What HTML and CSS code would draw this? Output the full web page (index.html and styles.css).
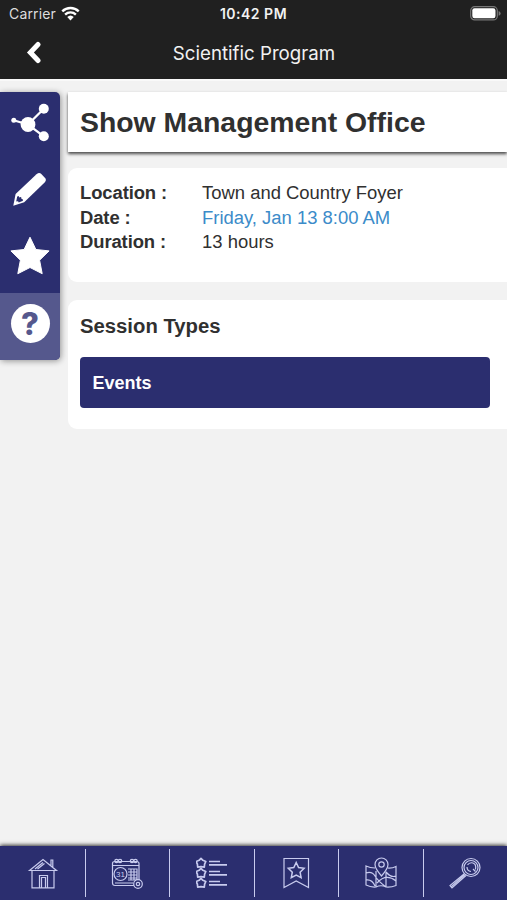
FILE: index.html
```html
<!doctype html>
<html lang="en">
    <head>
        <title>Scientific Program</title>
        <meta charset="UTF-8">
        <meta name="viewport" content="width=device-width, initial-scale=1">
        <link rel="stylesheet" href="styles.css">
    </head>
    <body>

        <header>
            <div class="status">
                <div class="carrier">
                    <span>Carrier</span>
                    <svg class="wifi" viewBox="0 0 18 14" width="19" height="15">
                        <path d="M1.2 4.9a11.4 11.4 0 0 1 15.6 0M3.9 8a7.4 7.4 0 0 1 10.2 0" fill="none" stroke="#fff" stroke-width="2.3"/>
                        <path d="M9 13.6L5.9 10.4a4.5 4.5 0 0 1 6.2 0z" fill="#fff"/>
                    </svg>
                </div>
                <div class="time">10:42 PM</div>
                <svg class="battery" viewBox="0 0 31 15" width="31" height="15">
                    <rect x=".7" y=".7" width="26.6" height="13.2" rx="4" fill="none" stroke="#777" stroke-width="1.2"/>
                    <rect x="2.3" y="2.3" width="23.2" height="10" rx="2.2" fill="#fff"/>
                    <path d="M28.6 5q2 .6 2 2.4t-2 2.4z" fill="#777"/>
                </svg>
            </div>
            <div class="titlebar">
                <a class="back" href="#" aria-label="Back">
                    <svg viewBox="0 0 16 24" width="16" height="24">
                        <path d="M12 3.500L4.400 11.500l7.600 8" fill="none" stroke="#fff" stroke-width="5" stroke-linecap="round"/>
                    </svg>
                </a>
                <div class="title">Scientific Program</div>
            </div>
        </header>

        <div class="page">
            <aside>
                <a class="tool" href="#" aria-label="Share">
                    <svg viewBox="0 0 40 40" width="40" height="40">
                        <path d="M3.6 18.2L18 22.5 33.8 6.7M18 22.5l15.8 11.8" fill="none" stroke="#fff" stroke-width="2.2"/>
                        <g fill="#fff">
                            <circle cx="3.8" cy="18.2" r="2.5"/>
                            <circle cx="18" cy="22.5" r="7.4"/>
                            <circle cx="33.8" cy="6.7" r="5"/>
                            <circle cx="33.8" cy="34.3" r="5"/>
                        </g>
                    </svg>
                </a>
                <a class="tool" href="#" aria-label="Notes">
                    <svg viewBox="0 0 40 40" width="40" height="40">
                        <path d="M26.500 5.200q2.800-2.300 4.800-.2l3.800 4q1.800 2.200-.5 4.500L14.200 33.200 3.300 36.800 5.600 25z" fill="#fff"/>
                        <path d="M6.200 32.500l.9-4.600q1.200-2.100 2.200.5 2.500-1 2.200 1.500 2.600.2 1 2.200l-3.800 1.400q-.3-1.700-2.500-1z" fill="#2b2e6f"/>
                    </svg>
                </a>
                <a class="tool" href="#" aria-label="Favorite">
                    <svg viewBox="0 0 40 40" width="40" height="40">
                        <path d="M20 1.200l5.900 12.300 13.200 1.400-9.500 9.300 2.600 13.500L20 31.500 7.800 37.700l2.600-13.500L.9 14.900l13.200-1.400z" fill="#fff" stroke="#fff" stroke-linejoin="round"/>
                    </svg>
                </a>
                <a class="tool active" href="#" aria-label="Help">
                    <span class="help">?</span>
                </a>
            </aside>

            <main>
                <h1>Show Management Office</h1>

                <section class="details">
                    <dl>
                        <dt>Location :</dt>
                        <dd>Town and Country Foyer</dd>
                        <dt>Date :</dt>
                        <dd><a href="#">Friday, Jan 13 8:00 AM</a></dd>
                        <dt>Duration :</dt>
                        <dd>13 hours</dd>
                    </dl>
                </section>

                <section class="types">
                    <h2>Session Types</h2>
                    <a class="type" href="#">Events</a>
                </section>
            </main>
        </div>

        <nav>
            <a href="#" aria-label="Home">
                <svg viewBox="0 0 32 32" width="32" height="32">
                    <path d="M2.500 13.500L16 2.500l13.500 11h-27zM5 13.500v17.300h22V13.500M12.500 30.800V18.500h8v12.300M14.500 30.800V20.500h4v10.300M24 9V3h1.800v7.500M8 12l8-6.500M10.500 12l7-5.500"/>
                </svg>
            </a>
            <a href="#" aria-label="Schedule">
                <svg viewBox="0 0 32 32" width="32" height="32">
                    <path d="M24 28.500H4q-2.500 0-2.500-2.500V6.500Q1.500 4.500 4 4.500H25.500Q28 4.500 28 6.500V23M1.500 8.500H28M4 26h18M17 12h9v11h-9M20 12v11M23 12v11M17 15h9M17 18h9M17 21h9"/>
                    <circle cx="9.500" cy="17" r="6.500"/>
                    <circle cx="5.500" cy="4" r="1.700"/><circle cx="9" cy="4" r="1.700"/>
                    <circle cx="21" cy="4" r="1.700"/><circle cx="24.500" cy="4" r="1.700"/>
                    <circle class="badge" cx="27" cy="27" r="4.300"/>
                    <circle cx="27" cy="27" r="1.700"/>
                    <text x="9.500" y="19.800">31</text>
                </svg>
            </a>
            <a href="#" aria-label="Sessions">
                <svg viewBox="0 0 32 32" width="32" height="32">
                    <g stroke-width="1.700" stroke-linejoin="round">
                        <path id="star" d="M5 1.300l1.900 2 2.900 1.200-1.200 2.700-.3 2.900L5 9.700l-3.300.4-.3-2.900L.2 4.500l2.900-1.200z"/>
                        <use href="#star" y="10"/>
                        <use href="#star" y="20"/>
                    </g>
                    <path d="M13 4.500h11M13 7.800h18M13 14.500h11M13 17.800h18M13 24.500h11M13 27.800h18" stroke-width="1.700"/>
                </svg>
            </a>
            <a href="#" aria-label="Bookmarks">
                <svg viewBox="0 0 32 32" width="32" height="32">
                    <path d="M4 1.500h24.500v29L16.200 24 4 30.500z"/>
                    <path d="M16.200 5.500l2.400 5 5.500.8-4 3.900 1 5.500-4.900-2.600-4.900 2.600 1-5.500-4-3.900 5.500-.8z" stroke-width="1.500"/>
                </svg>
            </a>
            <a href="#" aria-label="Maps">
                <svg viewBox="0 0 32 32" width="32" height="32">
                    <path d="M10 11Q5 11 1 9v19q5 2.500 10 2 5-2.500 10 0 5 .5 10-1.500V9.500Q27 11.500 22.500 11M11 14v16M21 14.500V30M1 16q6-2 9 3t11 11M1 23q6-1 9 6M21 15q5 6 10 4M12 26q9-10 19-2"/>
                    <path d="M16.500 19q-6.500-7.500-6.500-11.500a6.500 6.500 0 0 1 13 0q0 4-6.500 11.500z"/>
                    <circle cx="16.500" cy="7.500" r="2.700"/>
                </svg>
            </a>
            <a href="#" aria-label="Search">
                <svg viewBox="0 0 32 32" width="32" height="32">
                    <circle cx="22" cy="10.500" r="9"/>
                    <circle cx="22" cy="10.500" r="7"/>
                    <path d="M15.300 16.800L1 28.500l2 2.500 14-12.500M2.500 29.500l13.300-11.700M18.500 8q2-3 5.500-2t2.500 6.500M18 10q0 4 4 4.500M24 12l2.500 2.500"/>
                </svg>
            </a>
        </nav>

    </body>
</html>
```
FILE: styles.css
```css
* {
  box-sizing: border-box;
}

body {
  margin: 0;
  height: 900px;
  display: flex;
  flex-direction: column;
  overflow: hidden;
  font-family: "Liberation Sans", Arial, sans-serif;
  color: #303030;
  background: #f2f2f2;
}

a {
  text-decoration: none;
  color: inherit;
}

svg {
  display: block;
}

/* header */

header {
  height: 79px;
  color: #f2f2f2;
  background: #202020;
  font-family: Inter, sans-serif;
}

.status {
  display: grid;
  grid-template-columns: 1fr auto 1fr;
  align-items: center;
  height: 27px;
  padding: 0 6px 0 9px;
}

.carrier {
  display: flex;
  align-items: center;
  gap: 5px;
  font-size: 14px;
  letter-spacing: .15px;
  color: #ddd;
}

.time {
  margin-right: 3px;
  font-size: 14px;
  font-weight: 600;
  letter-spacing: .5px;
}

.battery {
  justify-self: end;
}

.titlebar {
  display: grid;
  grid-template-columns: 60px 1fr 60px;
  align-items: center;
  height: 52px;
}

.back {
  padding-left: 26px;
}

.title {
  padding-left: 1px;
  text-align: center;
  font-size: 18.7px;
}

/* content */

.page {
  flex: 1;
  display: flex;
  align-items: flex-start;
  gap: 8px;
  padding-top: 11px;
  border-top: 2px solid #f9f9f9;
}

aside {
  width: 60px;
  border-radius: 0 5px 5px 0;
  background: #2b2e6f;
  box-shadow: 1px 1px 6px rgba(0, 0, 0, .4);
  overflow: hidden;
}

.tool {
  display: flex;
  align-items: center;
  justify-content: center;
  height: 67px;
  padding-bottom: 8px;
}

.active {
  padding-bottom: 6px;
  background: #55588d;
}

.help {
  width: 39px;
  height: 39px;
  border-radius: 50%;
  background: #fff;
  color: #55588d;
  font-family: Inter, sans-serif;
  font-size: 31px;
  font-weight: 800;
  line-height: 39px;
  text-align: center;
}

main {
  flex: 1;
}

h1 {
  height: 60px;
  margin: 0 0 16px;
  padding-left: 12px;
  background: #fff;
  font-size: 28.4px;
  line-height: 60px;
  box-shadow: 0 2px 3px rgba(0, 0, 0, .7);
}

section {
  padding: 12px 17px 12px 12px;
  border-radius: 9px 0 0 9px;
  background: #fff;
}

.details {
  height: 114px;
  margin-bottom: 18px;
  padding-top: 13px;
}

dl {
  display: grid;
  grid-template-columns: 122px 1fr;
  margin: 0;
  font-size: 18.45px;
  line-height: 24.5px;
}

dt {
  font-weight: bold;
  letter-spacing: -.1px;
}

dd {
  margin: 0;
}

dd a {
  color: #3b8bc9;
}

.types {
  height: 129px;
}

h2 {
  margin: 0 0 16.5px;
  font-size: 20.3px;
  line-height: 28px;
}

.type {
  display: block;
  height: 51px;
  padding-left: 12.5px;
  border-radius: 4px;
  color: #fff;
  background: #2b2e6f;
  font-size: 18px;
  font-weight: bold;
  line-height: 52px;
}

/* bottom bar */

nav {
  display: grid;
  grid-template-columns: repeat(6, 1fr);
  height: 54px;
  padding: 3px 0;
  background: #2b2e6f;
  box-shadow: 0 -1px 4px rgba(0, 0, 0, .8);
}

nav a {
  display: flex;
  align-items: center;
  justify-content: center;
}

nav a:first-child {
  padding-left: 1px;
}

nav a + a {
  border-left: 1.5px solid #c8cbee;
}

nav svg {
  fill: none;
  stroke: #c8cbee;
  stroke-width: 1.2;
}

nav text {
  fill: #c8cbee;
  stroke: none;
  font-size: 8px;
  text-anchor: middle;
}

.badge {
  fill: #2b2e6f;
}
```
